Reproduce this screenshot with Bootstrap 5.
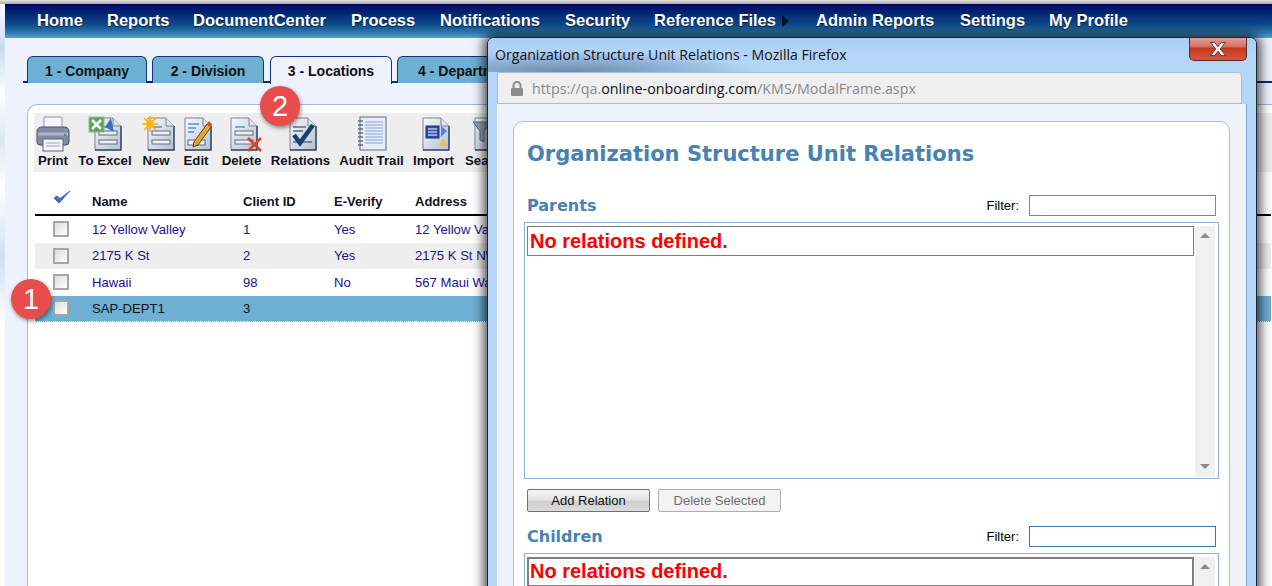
<!DOCTYPE html>
<html lang="en">
<head>
<meta charset="utf-8">
<title>Locations</title>
<link rel="stylesheet" href="https://cdn.jsdelivr.net/npm/bootstrap@5.3.0/dist/css/bootstrap.min.css">
<style>
html,body{height:586px;overflow:hidden;margin:0}
body{font-family:"Liberation Sans",Arial,sans-serif;font-size:13px;color:#000;background:linear-gradient(180deg,#fff 0,#c9dcf3 8%,#fff 16%,#dbe6f3 24%,#fff 32%,#cfe0f3 44%,#fff 55%,#fff 100%)}
.screen{position:relative;height:586px;padding-top:4px;overflow:hidden;background:transparent}
.topedge{position:absolute;left:0;right:0;top:0;height:4px;background:linear-gradient(180deg,#e6e6df,#a9a99f)}
.pagewrap{margin-left:5px;height:582px;background:#edf2fc;display:flex;flex-direction:column}
.mainbar{height:34px;background:linear-gradient(180deg,#000a62 0,#04246f 25%,#0c4a8a 60%,#2f7bb0 85%,#58a3cd 100%);padding:0 0 2px 32px;gap:0;flex:none}
.mainbar a{color:#fff;font-weight:700;font-size:16.5px;text-decoration:none;text-shadow:0 1px 1px rgba(0,0,30,.7);line-height:30px;white-space:nowrap;display:flex;align-items:center}
.mb1{width:70px}.mb2{width:86px}.mb3{width:158px}.mb4{width:89px}.mb5{width:125px}.mb6{width:89px}.mb7{width:162px}.mb8{width:144px}.mb9{width:89px}
.tri{display:inline-block;width:0;height:0;border-left:7px solid #0a0f1e;border-top:6px solid transparent;border-bottom:6px solid transparent;margin-left:6px;margin-top:2px}
.tabrow{margin:18px 0 0 18px;border-bottom:2px solid #0b2a7a;height:27px;flex-wrap:nowrap;gap:5px;padding-left:4px}
.tabrow .nav-link{height:27px;margin:0;padding:2px 0 0;display:flex;align-items:center;justify-content:center;background:#6db0d3;color:#111;font-weight:700;font-size:14px;border:1px solid #14337f;border-bottom:0;border-radius:6px 6px 0 0;white-space:nowrap}
.tabrow .nav-link.active{background:#edf2fc;color:#111;height:28px;border-color:#14337f}
.tw1{width:120px}.tw2{width:112px}.tabrow .nav-link.tw2{margin-right:1px}.tw3{width:122px}.tw4{width:148px}
.sheet{margin:21px 0 0 22px;flex:1;background:#fff;border:1px solid #9db8e6;border-right:0;border-bottom:0;border-top-left-radius:10px;padding:8px 0 0 6px}
.toolstrip{height:59px;background:#eee;display:flex;padding-left:3px}
.toolitem{display:flex;flex-direction:column;align-items:center;font-size:13.2px;font-weight:700;color:#10131f;white-space:nowrap;height:59px;padding-top:3px;line-height:15px}
.toolitem svg{display:block;margin-bottom:2px;flex:none}
.toolitem span{display:block;margin-top:-1px}
.ti1{width:32px}.ti2{width:54px;margin-left:9px}.ti3{width:28px;margin-left:10px}.ti4{width:24px;margin-left:14px}.ti5{width:41px;margin-left:13px}.ti6{width:59px;margin-left:9px}.ti7{width:65px;margin-left:9px}.ti8{width:41px;margin-left:9px}.ti9{width:46px;margin-left:10px}
.ti3 svg{transform:translateX(2px)}.ti4 svg{transform:translateX(2px)}.ti5 svg{transform:translateX(4px)}.ti6 svg{transform:translateX(2px)}.ti8 svg{transform:translateX(2px)}
.gridbox{table-layout:fixed;width:1236px;margin:17px 0 0 1px;--bs-table-bg:transparent;border-collapse:separate;border-spacing:0}
.gridbox th{font-size:13px;font-weight:700;color:#10131f;border-bottom:2px solid #000;padding:0 0 5px 0;height:27px;vertical-align:bottom;line-height:15px}
.gridbox td{font-size:13.1px;height:26.5px;padding:0;border:0;vertical-align:middle;color:#21108f;line-height:15px}
.gridbox tr.alt td{background:#eee}
.gridbox tr.sel td{background:#6db0d3;color:#111;border-bottom:1px dotted #fff}
.gridbox .cbcell{padding-left:18px}
.c1{width:57px}.c2{width:151px}.c3{width:91px}.c4{width:81px}
.gridbox .tick{width:16px;height:16px;margin:0;border:2px solid #a6a6a6;border-radius:0;background:linear-gradient(135deg,#dcdcdc,#fff);display:block;float:none}
.marker{position:absolute;width:40px;height:40px;border-radius:50%;background:#e84c4c;color:#fff;font-size:29px;line-height:40px;text-align:center;box-shadow:1px 2px 4px rgba(0,0,0,.45);z-index:5}
.mk1{left:11px;top:279px}.mk2{left:260px;top:86px}
.popwin{position:absolute;left:487px;top:37px;width:770px;height:600px;border:1px solid #1d2530;border-radius:7px 7px 0 0;box-shadow:0 0 12px 3px rgba(0,0,0,.75);z-index:3;background:#b5d5f7;display:flex;flex-direction:column;overflow:hidden}
.glasstop{height:34px;flex:none;position:relative;padding-left:7px;font-family:"Open Sans",sans-serif;font-size:14.1px;color:#111;line-height:34px;white-space:nowrap;background:radial-gradient(ellipse 190px 22px at 80px 34px,#6f8aa8 0,rgba(130,165,205,.75) 55%,rgba(181,213,247,0) 100%),linear-gradient(180deg,#a8cdf2,#b5d5f7 50%)}
.closebtn{position:absolute;top:-1px;right:9px;width:58px;height:24px;border:1px solid #5c2a24;border-top:0;border-radius:0 0 5px 5px;background:linear-gradient(180deg,#e8a097 0,#d5736a 40%,#c33a22 50%,#d5583e 100%);display:flex;align-items:center;justify-content:center;padding:0}
.urlrow{height:32px;flex:none;margin:0 14px 0 9px;background:#efefef;border:1px solid #a8bfd8;border-radius:2px 4px 0 0;display:flex;align-items:center;padding:2px 0 0 12px;gap:8px;font-family:"Open Sans",sans-serif;font-size:14.3px;color:#8a8a8a;white-space:nowrap}
.urlrow b{font-weight:400;color:#111}
.framebody{flex:1;margin:0 9px 0 8px;background:#edf2fc;border-right:1px solid #7fa5d6;border-left:1px solid #c4d6ee;padding:17px 16px 0 16px}
.innercard{height:600px;background:#fff;border:1px solid #a4bde8;border-radius:10px 10px 0 0;padding:0 10px}
.bigtitle{font-family:"DejaVu Sans",sans-serif;font-weight:700;font-size:21px;color:#4682b4;line-height:28px;margin:18px 0 27px 3px;white-space:nowrap}
.sectionrow{display:flex;align-items:center;height:21px;padding:0 3px}
.sectionname{font-family:"DejaVu Sans",sans-serif;font-weight:700;font-size:16px;color:#4682b4;flex:1;padding-top:1px}
.filterlabel{font-size:13px;color:#000;margin-right:10px}
.filterbox{width:187px;height:21px;border:1px solid #5d8cb8;border-radius:0;padding:0 3px;background:#fff;min-height:0}
.filterbox.on{border-color:#3a78ae}
.listframe{border:1px solid #8fb0e0;padding:3px 3px 2px 2px;display:flex;gap:1px;margin-top:6px}
.lf1{height:257px}.lf2{height:260px}
.listfill{flex:1}
.emptyrow{height:30px;border:1px solid #7f7f7f;color:#f00;font-weight:700;font-size:20px;line-height:28px;padding-left:2px}
.emptyrow.deep{border-width:2px;line-height:24px;padding-left:1px}
.vscroll{width:20px;background:#f0f0f0;display:flex;flex-direction:column;justify-content:space-between;align-items:center;padding:7px 0}
.up{width:0;height:0;border:5px solid transparent;border-top:0;border-bottom:5px solid #8a8a8a}
.down{width:0;height:0;border:5px solid transparent;border-bottom:0;border-top:5px solid #8a8a8a}
.actionrow{display:flex;gap:8px;padding-left:3px;margin:10px 0 14px}
.actionbtn{width:123px;height:23px;padding:0;font-size:13px;line-height:20px;border:1px solid #6f6f6f;border-radius:2px;color:#111;background:linear-gradient(180deg,#f4f4f4 0,#e6e6e6 45%,#cfcfcf 55%,#dcdcdc 100%)}
.actionbtn:disabled{opacity:1;color:#6d6d6d;border-color:#adadad;background:#f3f3f3}
</style>
</head>
<body>
<svg width="0" height="0" class="position-absolute">
<defs>
<linearGradient id="pg" x1="0" y1="0" x2="1" y2="1"><stop offset="0" stop-color="#f7f8fb"/><stop offset="1" stop-color="#b5c0d2"/></linearGradient>
<symbol id="docpage" viewBox="0 0 28 34">
<path d="M1 1H19L27 9V33H1Z" fill="url(#pg)" stroke="#77859c"/>
<path d="M19 1V9H27" fill="#dfe4ec" stroke="#77859c"/>
<path d="M1 33H27V9" fill="none" stroke="#3d4c68" stroke-width="1.5"/>
</symbol>
<symbol id="doclines" viewBox="0 0 28 34">
<use href="#docpage" width="28" height="34"/>
<path d="M5 10H15" stroke="#4a96d8" stroke-width="1.5"/>
<rect x="5" y="14" width="18" height="4" fill="#eef0f4" stroke="#5d6a80"/>
<rect x="5" y="23" width="18" height="4" fill="#eef0f4" stroke="#5d6a80"/>
</symbol>
</defs>
</svg>
<div class="screen">
  <div class="topedge"></div>
  <div class="pagewrap">
    <nav class="mainbar d-flex align-items-center">
      <a class="mb1" href="#">Home</a><a class="mb2" href="#">Reports</a><a class="mb3" href="#">DocumentCenter</a><a class="mb4" href="#">Process</a><a class="mb5" href="#">Notifications</a><a class="mb6" href="#">Security</a><a class="mb7" href="#">Reference Files<i class="tri"></i></a><a class="mb8" href="#">Admin Reports</a><a class="mb9" href="#">Settings</a><a href="#">My Profile</a>
    </nav>
    <ul class="nav nav-tabs tabrow">
      <li class="nav-item"><a class="nav-link tw1" href="#">1 - Company</a></li>
      <li class="nav-item"><a class="nav-link tw2" href="#">2 - Division</a></li>
      <li class="nav-item"><a class="nav-link tw3 active" href="#">3 - Locations</a></li>
      <li class="nav-item"><a class="nav-link tw4" href="#">4 - Departments</a></li>
    </ul>
    <div class="sheet">
      <div class="toolstrip">
        <div class="toolitem ti1"><svg width="34" height="36" viewBox="0 0 34 36"><rect x="8" y="1" width="18" height="13" rx="1" fill="#f4f5f8" stroke="#8a93a3"/><path d="M1 16Q1 11 6 11H28Q33 11 33 16V26Q33 29 30 29H4Q1 29 1 26Z" fill="#7e8ba0" stroke="#4b5568"/><path d="M2 18H32" stroke="#a9b4c5" stroke-width="3"/><circle cx="29" cy="19" r="1.2" fill="#27a84a"/><rect x="7" y="23" width="20" height="12" fill="#f3f4f7" stroke="#5b6579"/><path d="M10 27H24M10 30H24" stroke="#9aa5b8"/></svg><span>Print</span></div>
        <div class="toolitem ti2"><svg width="34" height="36" viewBox="0 0 34 36"><use href="#doclines" x="6" y="1" width="28" height="34"/><rect x="1" y="1" width="15" height="15" fill="#5aa55a" stroke="#8ec58e"/><path d="M4 4L13 13M13 4L4 13" stroke="#fff" stroke-width="2.5"/><path d="M23 2L26 16L17 11Z" fill="#3f6fc4"/></svg><span>To Excel</span></div>
        <div class="toolitem ti3"><svg width="34" height="36" viewBox="0 0 34 36"><use href="#doclines" x="6" y="1" width="28" height="34"/><circle cx="9" cy="8" r="4" fill="#ffc627"/><path d="M9 0V16M1 8H17M3 2L15 14M15 2L3 14" stroke="#ffb400" stroke-width="1.5"/></svg><span>New</span></div>
        <div class="toolitem ti4"><svg width="30" height="36" viewBox="0 0 30 36"><use href="#docpage" x="1" y="1" width="28" height="34"/><path d="M5 8H16M5 12H13M5 16H11" stroke="#4a96d8" stroke-width="1.4"/><rect x="5" y="24" width="17" height="5" fill="#eef0f4" stroke="#5d6a80"/><path d="M11 26L24 8L28 11L15 29L10 31Z" fill="#e8a72c" stroke="#5a4520"/><path d="M24 8L26 5L29 8L28 11Z" fill="#d84a2a"/></svg><span>Edit</span></div>
        <div class="toolitem ti5"><svg width="36" height="36" viewBox="0 0 36 36"><use href="#doclines" x="2" y="1" width="28" height="34"/><path d="M20 22L33 35M33 22L20 35" stroke="#e2401f" stroke-width="2.6"/></svg><span>Delete</span></div>
        <div class="toolitem ti6"><svg width="30" height="36" viewBox="0 0 30 36"><use href="#docpage" x="1" y="1" width="28" height="34"/><path d="M5 11H18M5 15H15M5 26H24" stroke="#5d6a80" stroke-width="1.4"/><path d="M6 19L12 27L25 9" fill="none" stroke="#17406f" stroke-width="4.5"/></svg><span>Relations</span></div>
        <div class="toolitem ti7"><svg width="30" height="36" viewBox="0 0 30 36"><rect x="3" y="1" width="26" height="33" fill="#e8ecf3" stroke="#5d6a80"/><path d="M8 6H26M8 9H26M8 12H26M8 15H26M8 18H26M8 21H26M8 24H26M8 27H26" stroke="#7fa6de" stroke-width="1.2"/><path d="M1 5H6M1 9H6M1 13H6M1 17H6M1 21H6M1 25H6M1 29H6" stroke="#626c7e" stroke-width="1.6"/></svg><span>Audit Trail</span></div>
        <div class="toolitem ti8"><svg width="30" height="36" viewBox="0 0 30 36"><use href="#docpage" x="1" y="1" width="28" height="34"/><rect x="5" y="10" width="13" height="12" fill="#2e4ea8" stroke="#1a2a70"/><path d="M7 13H16M7 16H16M7 19H16" stroke="#fff"/><path d="M20 10L26 15L20 21Z" fill="#4a86d6"/><path d="M18 30L22 22L26 30Z" fill="#f0c23a"/></svg><span>Import</span></div>
        <div class="toolitem ti9"><svg width="30" height="36" viewBox="0 0 30 36"><use href="#docpage" x="2" y="1" width="28" height="34"/><path d="M1 6H19L12 15V26L8 24V15Z" fill="#9aa2b0" stroke="#5d6a80"/></svg><span>Search</span></div>
      </div>
      <table class="table gridbox mb-0">
        <colgroup><col class="c1"><col class="c2"><col class="c3"><col class="c4"><col></colgroup>
        <thead><tr><th class="cbcell"><svg width="18" height="15" viewBox="0 0 18 15" class="d-block mb-1"><path d="M1 8L6 13L17 1L7 8.500L4 6Z" fill="#3f6fc4" stroke="#3f6fc4"/></svg></th><th>Name</th><th>Client ID</th><th>E-Verify</th><th>Address</th></tr></thead>
        <tbody>
          <tr><td class="cbcell"><input class="form-check-input tick" type="checkbox" aria-label="Select"></td><td>12 Yellow Valley</td><td>1</td><td>Yes</td><td>12 Yellow Valley</td></tr>
          <tr class="alt"><td class="cbcell"><input class="form-check-input tick" type="checkbox" aria-label="Select"></td><td>2175 K St</td><td>2</td><td>Yes</td><td>2175 K St NW</td></tr>
          <tr><td class="cbcell"><input class="form-check-input tick" type="checkbox" aria-label="Select"></td><td>Hawaii</td><td>98</td><td>No</td><td>567 Maui Way</td></tr>
          <tr class="sel"><td class="cbcell"><input class="form-check-input tick" type="checkbox" aria-label="Select"></td><td>SAP-DEPT1</td><td>3</td><td></td><td></td></tr>
        </tbody>
      </table>
    </div>
  </div>
  <div class="marker mk1">1</div>
  <div class="marker mk2">2</div>
  <div class="popwin">
    <div class="glasstop">Organization Structure Unit Relations - Mozilla Firefox
      <button class="closebtn" type="button" aria-label="Close"><svg width="22" height="16" viewBox="0 0 20 14"><path d="M3 1H7L10 5L13 1H17L12 7L17 13H13L10 9L7 13H3L8 7Z" fill="#f4f4f4" stroke="#5c2a24" stroke-width=".8"/></svg></button>
    </div>
    <div class="urlrow"><svg width="14" height="16" viewBox="0 0 14 16"><path d="M3.500 7V4.500a3.500 3.500 0 0 1 7 0V7" fill="none" stroke="#8c8c8c" stroke-width="2"/><rect x="1" y="7" width="12" height="8" rx="1" fill="#8c8c8c"/></svg><span>https://qa.<b>online-onboarding.com</b>/KMS/ModalFrame.aspx</span></div>
    <div class="framebody">
      <div class="innercard">
        <h1 class="bigtitle">Organization Structure Unit Relations</h1>
        <div class="sectionrow"><div class="sectionname">Parents</div><label class="filterlabel">Filter:</label><input class="form-control filterbox" type="text" aria-label="Filter parents"></div>
        <div class="listframe lf1">
          <div class="listfill"><div class="emptyrow">No relations defined.</div></div>
          <div class="vscroll"><i class="up"></i><i class="down"></i></div>
        </div>
        <div class="actionrow">
          <button class="btn actionbtn" type="button">Add Relation</button>
          <button class="btn actionbtn" type="button" disabled>Delete Selected</button>
        </div>
        <div class="sectionrow"><div class="sectionname">Children</div><label class="filterlabel">Filter:</label><input class="form-control filterbox on" type="text" aria-label="Filter children"></div>
        <div class="listframe lf2">
          <div class="listfill"><div class="emptyrow deep">No relations defined.</div></div>
          <div class="vscroll"><i class="up"></i><i class="down"></i></div>
        </div>
      </div>
    </div>
  </div>
</div>
</body>
</html>
